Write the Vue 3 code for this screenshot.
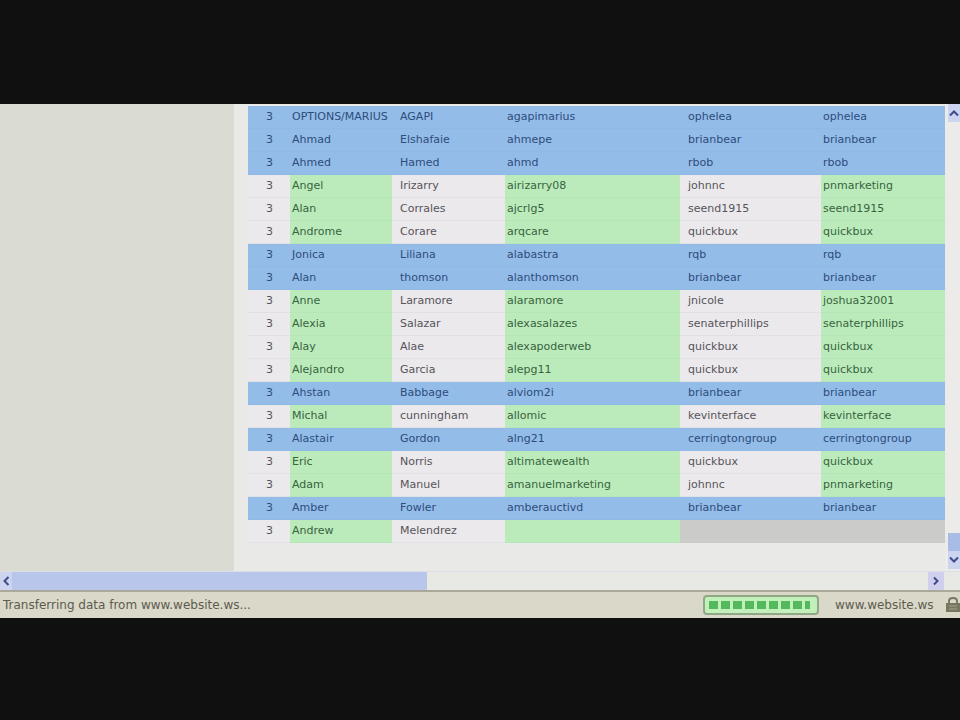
<template>
  <div class="screen">
    <main class="browser">
      <div class="viewport">
        <aside class="side-panel"></aside>
        <div class="content">
          <table class="members">
            <colgroup>
              <col class="col-level" />
              <col class="col-first" />
              <col class="col-last" />
              <col class="col-user" />
              <col class="col-sponsor" />
              <col class="col-upline" />
            </colgroup>
            <tbody>
              <tr v-for="(row, i) in rows" :key="i" :class="row.type">
                <td class="level">3</td>
                <td class="tint">{{ row.first }}</td>
                <td class="wide">{{ row.last }}</td>
                <td class="tint">{{ row.user }}</td>
                <td class="sponsor">{{ row.sponsor }}</td>
                <td class="tint upline">{{ row.upline }}</td>
              </tr>
            </tbody>
          </table>
        </div>
        <div class="scroll-y">
          <button type="button" class="arrow" aria-label="Scroll up">
            <svg width="10" height="8" viewBox="0 0 10 8"><path d="M1 6.5 5 2.5 9 6.5" /></svg>
          </button>
          <div class="thumb-y"></div>
          <button type="button" class="arrow down" aria-label="Scroll down">
            <svg width="10" height="8" viewBox="0 0 10 8"><path d="M1 1.5 5 5.5 9 1.5" /></svg>
          </button>
        </div>
      </div>

      <div class="scroll-x">
        <button type="button" class="arrow left" aria-label="Scroll left">
          <svg width="8" height="10" viewBox="0 0 8 10"><path d="M6.5 1 2.5 5 6.5 9" /></svg>
        </button>
        <div class="thumb-x"></div>
        <button type="button" class="arrow right" aria-label="Scroll right">
          <svg width="8" height="10" viewBox="0 0 8 10"><path d="M2 1.5 5.5 5 2 8.5" /></svg>
        </button>
      </div>

      <footer class="status">
        <span class="message">Transferring data from www.website.ws...</span>
        <div class="progress" role="progressbar" aria-label="Page loading">
          <span v-for="n in 9" :key="n" class="block" :class="{ last: n === 9 }"></span>
        </div>
        <span class="host">www.website.ws</span>
        <svg class="lock" width="15" height="18" viewBox="0 0 15 18">
          <path d="M4 8V5q0-3 4-3t4 3v3" fill="none" stroke="#77786a" stroke-width="2" />
          <rect x="1" y="7" width="14" height="9" fill="#77775f" />
          <path d="M4 10h8M4 13h8" stroke="#a5a58c" />
        </svg>
      </footer>
    </main>
  </div>
</template>

<script setup>
const member = (type, first, last, user, sponsor, upline) => ({ type, first, last, user, sponsor, upline });

const rows = [
  member('blue', 'OPTIONS/MARIUS', 'AGAPI', 'agapimarius', 'ophelea', 'ophelea'),
  member('blue', 'Ahmad', 'Elshafaie', 'ahmepe', 'brianbear', 'brianbear'),
  member('blue', 'Ahmed', 'Hamed', 'ahmd', 'rbob', 'rbob'),
  member('green', 'Angel', 'Irizarry', 'airizarry08', 'johnnc', 'pnmarketing'),
  member('green', 'Alan', 'Corrales', 'ajcrlg5', 'seend1915', 'seend1915'),
  member('green', 'Androme', 'Corare', 'arqcare', 'quickbux', 'quickbux'),
  member('blue', 'Jonica', 'Liliana', 'alabastra', 'rqb', 'rqb'),
  member('blue', 'Alan', 'thomson', 'alanthomson', 'brianbear', 'brianbear'),
  member('green', 'Anne', 'Laramore', 'alaramore', 'jnicole', 'joshua32001'),
  member('green', 'Alexia', 'Salazar', 'alexasalazes', 'senaterphillips', 'senaterphillips'),
  member('green', 'Alay', 'Alae', 'alexapoderweb', 'quickbux', 'quickbux'),
  member('green', 'Alejandro', 'Garcia', 'alepg11', 'quickbux', 'quickbux'),
  member('blue', 'Ahstan', 'Babbage', 'alviom2i', 'brianbear', 'brianbear'),
  member('green', 'Michal', 'cunningham', 'allomic', 'kevinterface', 'kevinterface'),
  member('blue', 'Alastair', 'Gordon', 'alng21', 'cerringtongroup', 'cerringtongroup'),
  member('green', 'Eric', 'Norris', 'altimatewealth', 'quickbux', 'quickbux'),
  member('green', 'Adam', 'Manuel', 'amanuelmarketing', 'johnnc', 'pnmarketing'),
  member('blue', 'Amber', 'Fowler', 'amberauctivd', 'brianbear', 'brianbear'),
  member('green pending', 'Andrew', 'Melendrez', '', '', '')
];
</script>

<style>
body {
  background: #101010;
}
</style>

<style scoped>
.screen {
  display: flex;
  box-sizing: border-box;
  min-height: 100vh;
  padding: 104px 0 102px;
  background: #101010;
  font-family: "DejaVu Sans", Verdana, sans-serif;
  font-size: 11px;
}

.browser {
  display: flex;
  flex: 1;
  flex-direction: column;
  min-width: 0;
  background: #e9e9e6;
}

.viewport {
  display: flex;
  flex: 1;
}

.side-panel {
  width: 234px;
  flex-shrink: 0;
  background: #dadbd2;
}

.content {
  flex: 1;
  padding: 2px 0 28px 14px;
  background: #e9e9e8;
}

.members {
  width: 100%;
  table-layout: fixed;
  border-collapse: collapse;
}

.col-level {
  width: 42px;
}

.col-first {
  width: 102px;
}

.col-last {
  width: 113px;
}

.col-user {
  width: 175px;
}

.col-sponsor {
  width: 141px;
}

td {
  height: 22px;
  padding: 0 2px;
  border-bottom: 1px solid #dfe1e2;
  line-height: 22px;
  white-space: nowrap;
  color: #57545b;
}

.level {
  padding-left: 18px;
}

.wide,
.sponsor {
  padding-left: 8px;
}

.green td {
  background: #ebe9eb;
}

.green .tint {
  border-bottom-color: #b5e5b8;
  background: #bcebbb;
  color: #37633e;
}

.blue td {
  border-bottom-color: #8fb9e5;
  background: #94bce8;
  color: #2d4c7c;
}

.pending .sponsor,
.green.pending .sponsor,
.green.pending .upline {
  border-bottom-color: #c9cac7;
  background: #cbccc9;
}

.arrow {
  display: flex;
  align-items: center;
  justify-content: center;
  margin: 0;
  padding: 0;
  border: 0;
  background: #ccd4f0;
}

.arrow path {
  fill: none;
  stroke: #3e4c8c;
  stroke-width: 2;
}

.scroll-y {
  display: flex;
  flex-direction: column;
  flex-shrink: 0;
  width: 12px;
  padding-left: 3px;
  background: #ecebea;
}

.scroll-y .arrow {
  height: 18px;
}

.thumb-y {
  height: 18px;
  margin-top: auto;
  background: #a9bce6;
}

.scroll-y .down {
  margin-bottom: 2px;
}

.scroll-x {
  display: flex;
  height: 18px;
  padding-right: 16px;
  border-top: 1px solid #dadfe5;
  background: #e8e8e4;
}

.left {
  width: 12px;
}

.thumb-x {
  width: 44%;
  background: #b9c6eb;
}

.right {
  width: 16px;
  margin-left: auto;
  background: #d0cfee;
}

.status {
  display: flex;
  align-items: center;
  height: 26px;
  border-top: 2px solid #aaa99a;
  background: #dad8c8;
  font-size: 12px;
  color: #5c5b50;
}

.message {
  flex: 1;
  padding-left: 3px;
}

.progress {
  display: flex;
  gap: 3px;
  box-sizing: border-box;
  width: 116px;
  height: 20px;
  padding: 4px;
  border: 2px solid #91a887;
  border-radius: 4px;
  background: #c1f0bb;
}

.block {
  width: 9px;
  background: #53b95c;
}

.last {
  width: 5px;
}

.host {
  width: 126px;
  padding-left: 16px;
  box-sizing: border-box;
}

.lock {
  flex-shrink: 0;
}
</style>
